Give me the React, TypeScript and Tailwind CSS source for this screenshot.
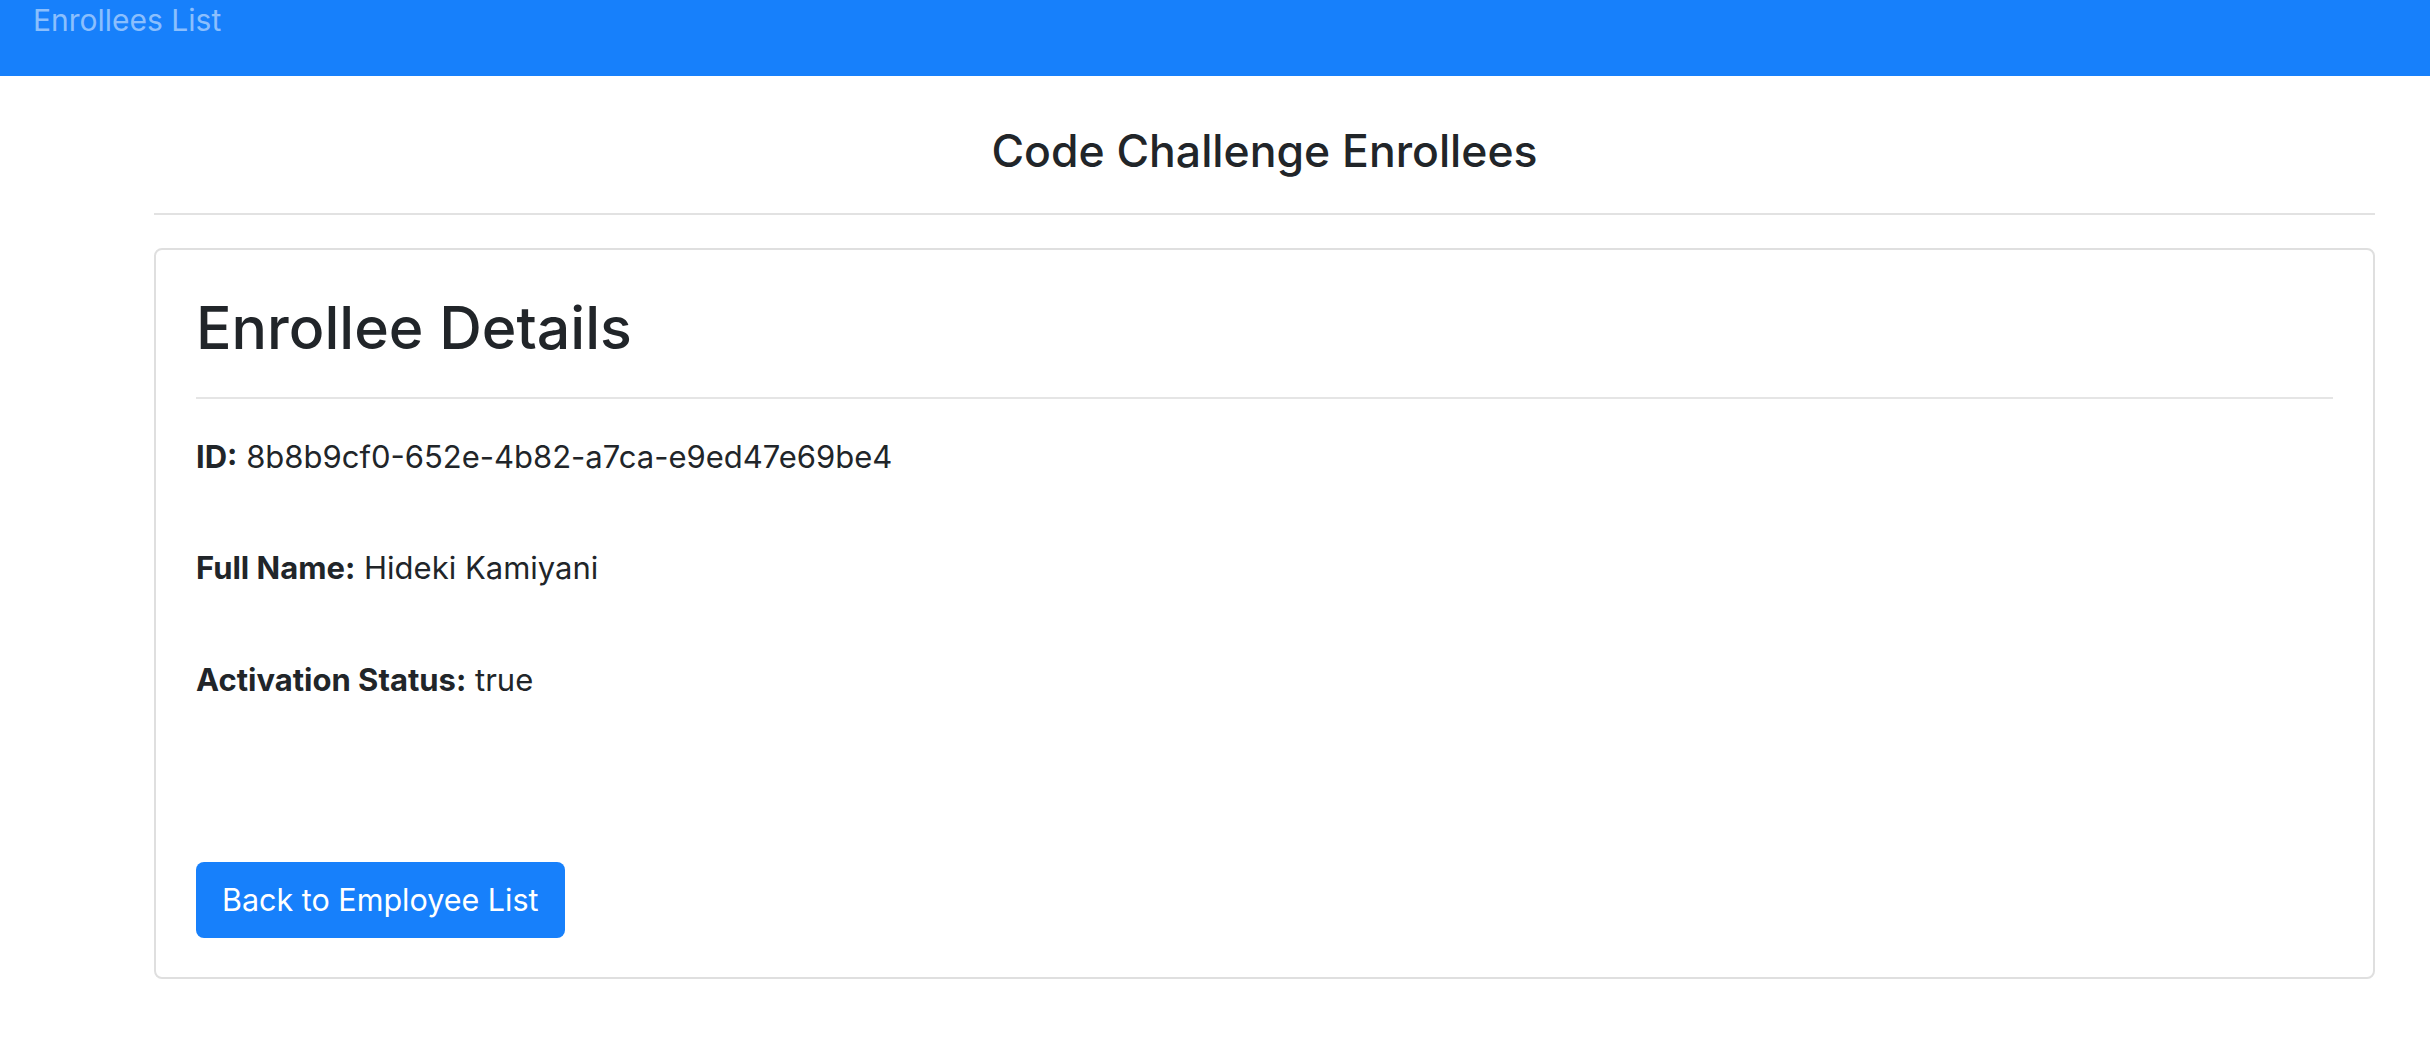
import React from 'react';

const enrollee = {
  id: '8b8b9cf0-652e-4b82-a7ca-e9ed47e69be4',
  name: 'Hideki Kamiyani',
  active: true,
};

function Field({ label, value, className }: { label: string; value: string; className?: string }) {
  return (
    <p className={`text-[31px] leading-none ${className ?? ''}`}>
      <strong className="font-bold">{label}:</strong> {value}
    </p>
  );
}

export default function App() {
  return (
    <div className="min-h-screen bg-white text-[#212529] font-['Inter',sans-serif]">
      {/* Navbar */}
      <nav className="h-[76px] bg-[#1780fb] pl-[33px] pt-[5px]">
        <a href="#" className="text-[30px] leading-none text-white/50">
          Enrollees List
        </a>
      </nav>

      <div className="ml-[154px] w-[2221px]">
        <h3 className="mt-[53px] text-center text-[44.5px] font-medium leading-none">
          Code Challenge Enrollees
        </h3>
        <hr className="mt-[39px] border-t-2 border-[#e2e2e2]" />

        {/* Card */}
        <div className="mt-[33px] rounded-[8px] border-2 border-[#dfdfdf] px-[40px] pt-[48px] pb-[39px]">
          <h1 className="text-[59px] font-medium leading-none">Enrollee Details</h1>
          <hr className="mt-[40px] border-t-2 border-[#e5e5e5]" />

          <Field label="ID" value={enrollee.id} className="mt-[42px]" />
          <Field label="Full Name" value={enrollee.name} className="mt-[80px]" />
          <Field label="Activation Status" value={String(enrollee.active)} className="mt-[81px]" />

          <button className="mt-[167px] flex h-[76px] items-center rounded-[8px] bg-[#1780fb] px-[26px] text-[30.5px] text-white">
            Back to Employee List
          </button>
        </div>
      </div>
    </div>
  );
}
